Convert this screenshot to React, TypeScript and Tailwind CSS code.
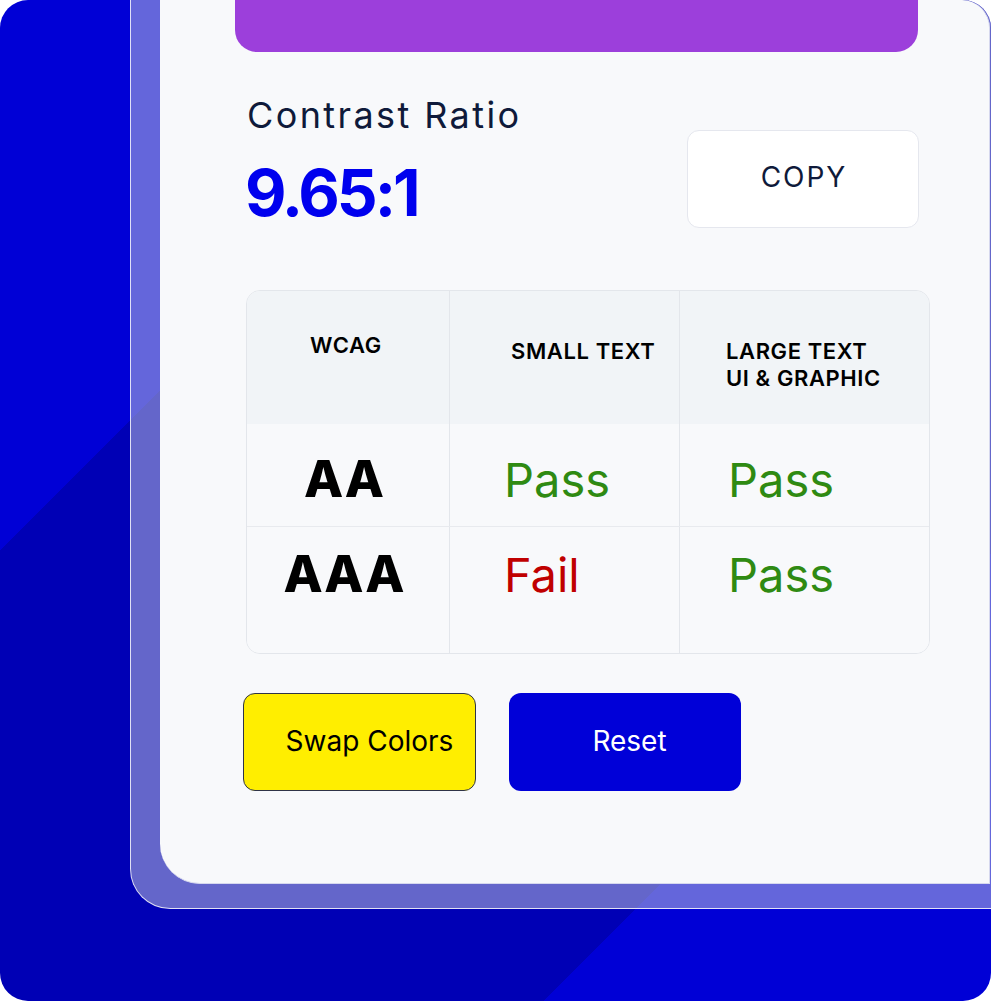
import React from "react";

const font = { fontFamily: "Inter, 'Noto Sans', sans-serif" };

type Row = { level: string; small: boolean; large: boolean };

const rows: Row[] = [
  { level: "AA", small: true, large: true },
  { level: "AAA", small: false, large: true },
];

function Verdict({ ok }: { ok: boolean }) {
  return ok ? (
    <span className="text-[47px] leading-none text-[#2f8a12]">Pass</span>
  ) : (
    <span className="text-[47px] leading-none text-[#c00000]">Fail</span>
  );
}

function ResultsTable() {
  return (
    <div className="mt-[62px] w-[684px] overflow-hidden rounded-[14px] border border-[#e3e6eb]">
      <div className="grid grid-cols-[202px_230px_1fr] bg-[#f1f4f7] text-[22px] leading-[27px] font-semibold tracking-[0.6px] text-black">
        <div className="h-[133px] pt-[41px] pl-[63px]">WCAG</div>
        <div className="h-[133px] border-l border-[#e3e6eb] pt-[47px] pl-[61px]">SMALL TEXT</div>
        <div className="h-[133px] border-l border-[#e3e6eb] pt-[47px] pl-[46px]">
          LARGE TEXT
          <br />
          UI &amp; GRAPHIC
        </div>
      </div>
      {rows.map((row, i) => (
        <div
          key={row.level}
          className={
            i === 0
              ? "grid h-[103px] grid-cols-[202px_230px_1fr] border-b border-[#e8eaee] bg-[#f8f9fb]"
              : "grid h-[126px] grid-cols-[202px_230px_1fr] bg-[#f8f9fb]"
          }
        >
          <div
            className={
              i === 0
                ? "pt-[29px] pr-[8px] pl-[1px] text-center text-[51px] leading-none font-extrabold tracking-[1px] text-black"
                : "pt-[21px] pr-[8px] pl-[1px] text-center text-[51px] leading-none font-extrabold tracking-[1px] text-black"
            }
          >
            {row.level}
          </div>
          <div className={i === 0 ? "border-l border-[#e3e6eb] pt-[32px] pl-[54px]" : "border-l border-[#e3e6eb] pt-[24px] pl-[54px]"}>
            <Verdict ok={row.small} />
          </div>
          <div className={i === 0 ? "border-l border-[#e3e6eb] pt-[32px] pl-[48px]" : "border-l border-[#e3e6eb] pt-[24px] pl-[48px]"}>
            <Verdict ok={row.large} />
          </div>
        </div>
      ))}
    </div>
  );
}

export default function App() {
  return (
    <div className="bg-white" style={font}>
      <div className="h-[1001px] w-[991px] overflow-hidden rounded-[28px] bg-[linear-gradient(135deg,#0000d6_389px,#0000b5_389px,#0000b5_1092px,#0000d6_1092px)]">
        {/* frosted frame */}
        <div className="ml-[130px] h-[909px] rounded-bl-[40px] border-b border-l border-white/80 bg-[#c8cce0]/50 pl-[29px] pb-[24px]">
          {/* card */}
          <div className="h-[884px] w-[830px] rounded-tr-[28px] rounded-bl-[40px] border-r border-b border-[#d6d8ee] bg-[#f8f9fb]">
            <div className="pl-[75px]">
              <div className="h-[52px] w-[683px] rounded-b-[22px] bg-[#9c3fdb]" />
            </div>
            <div className="pl-[86px]">
              <div className="mt-[45px] flex w-[673px] items-start justify-between">
                <div className="pl-[1px]">
                  <div className="text-[36px] leading-[36px] tracking-[2.4px] text-[#0f1a3a]">Contrast Ratio</div>
                  <div className="mt-[28px] -ml-[2px] text-[64px] leading-[64px] font-bold tracking-[-3px] text-[#0000ee]">
                    9.65:1
                  </div>
                </div>
                <button className="mt-[33px] flex h-[98px] w-[232px] items-center justify-center rounded-[12px] border border-[#e5e7ee] bg-white pb-[4px] pl-[2px] text-[28px] tracking-[2px] text-[#0f1a3a]">
                  COPY
                </button>
              </div>
              <ResultsTable />
              <div className="mt-[39px] -ml-[3px] flex gap-[33px]">
                <button className="flex h-[98px] w-[233px] items-center justify-center rounded-[12px] border-[1.5px] border-[#2f3447] bg-[#ffee00] pb-[2px] pl-[20px] text-[28px] text-black">
                  Swap Colors
                </button>
                <button className="flex h-[98px] w-[232px] items-center justify-center rounded-[12px] bg-[#0000d8] pb-[2px] pl-[9px] text-[28px] text-white">
                  Reset
                </button>
              </div>
            </div>
          </div>
        </div>
      </div>
    </div>
  );
}
